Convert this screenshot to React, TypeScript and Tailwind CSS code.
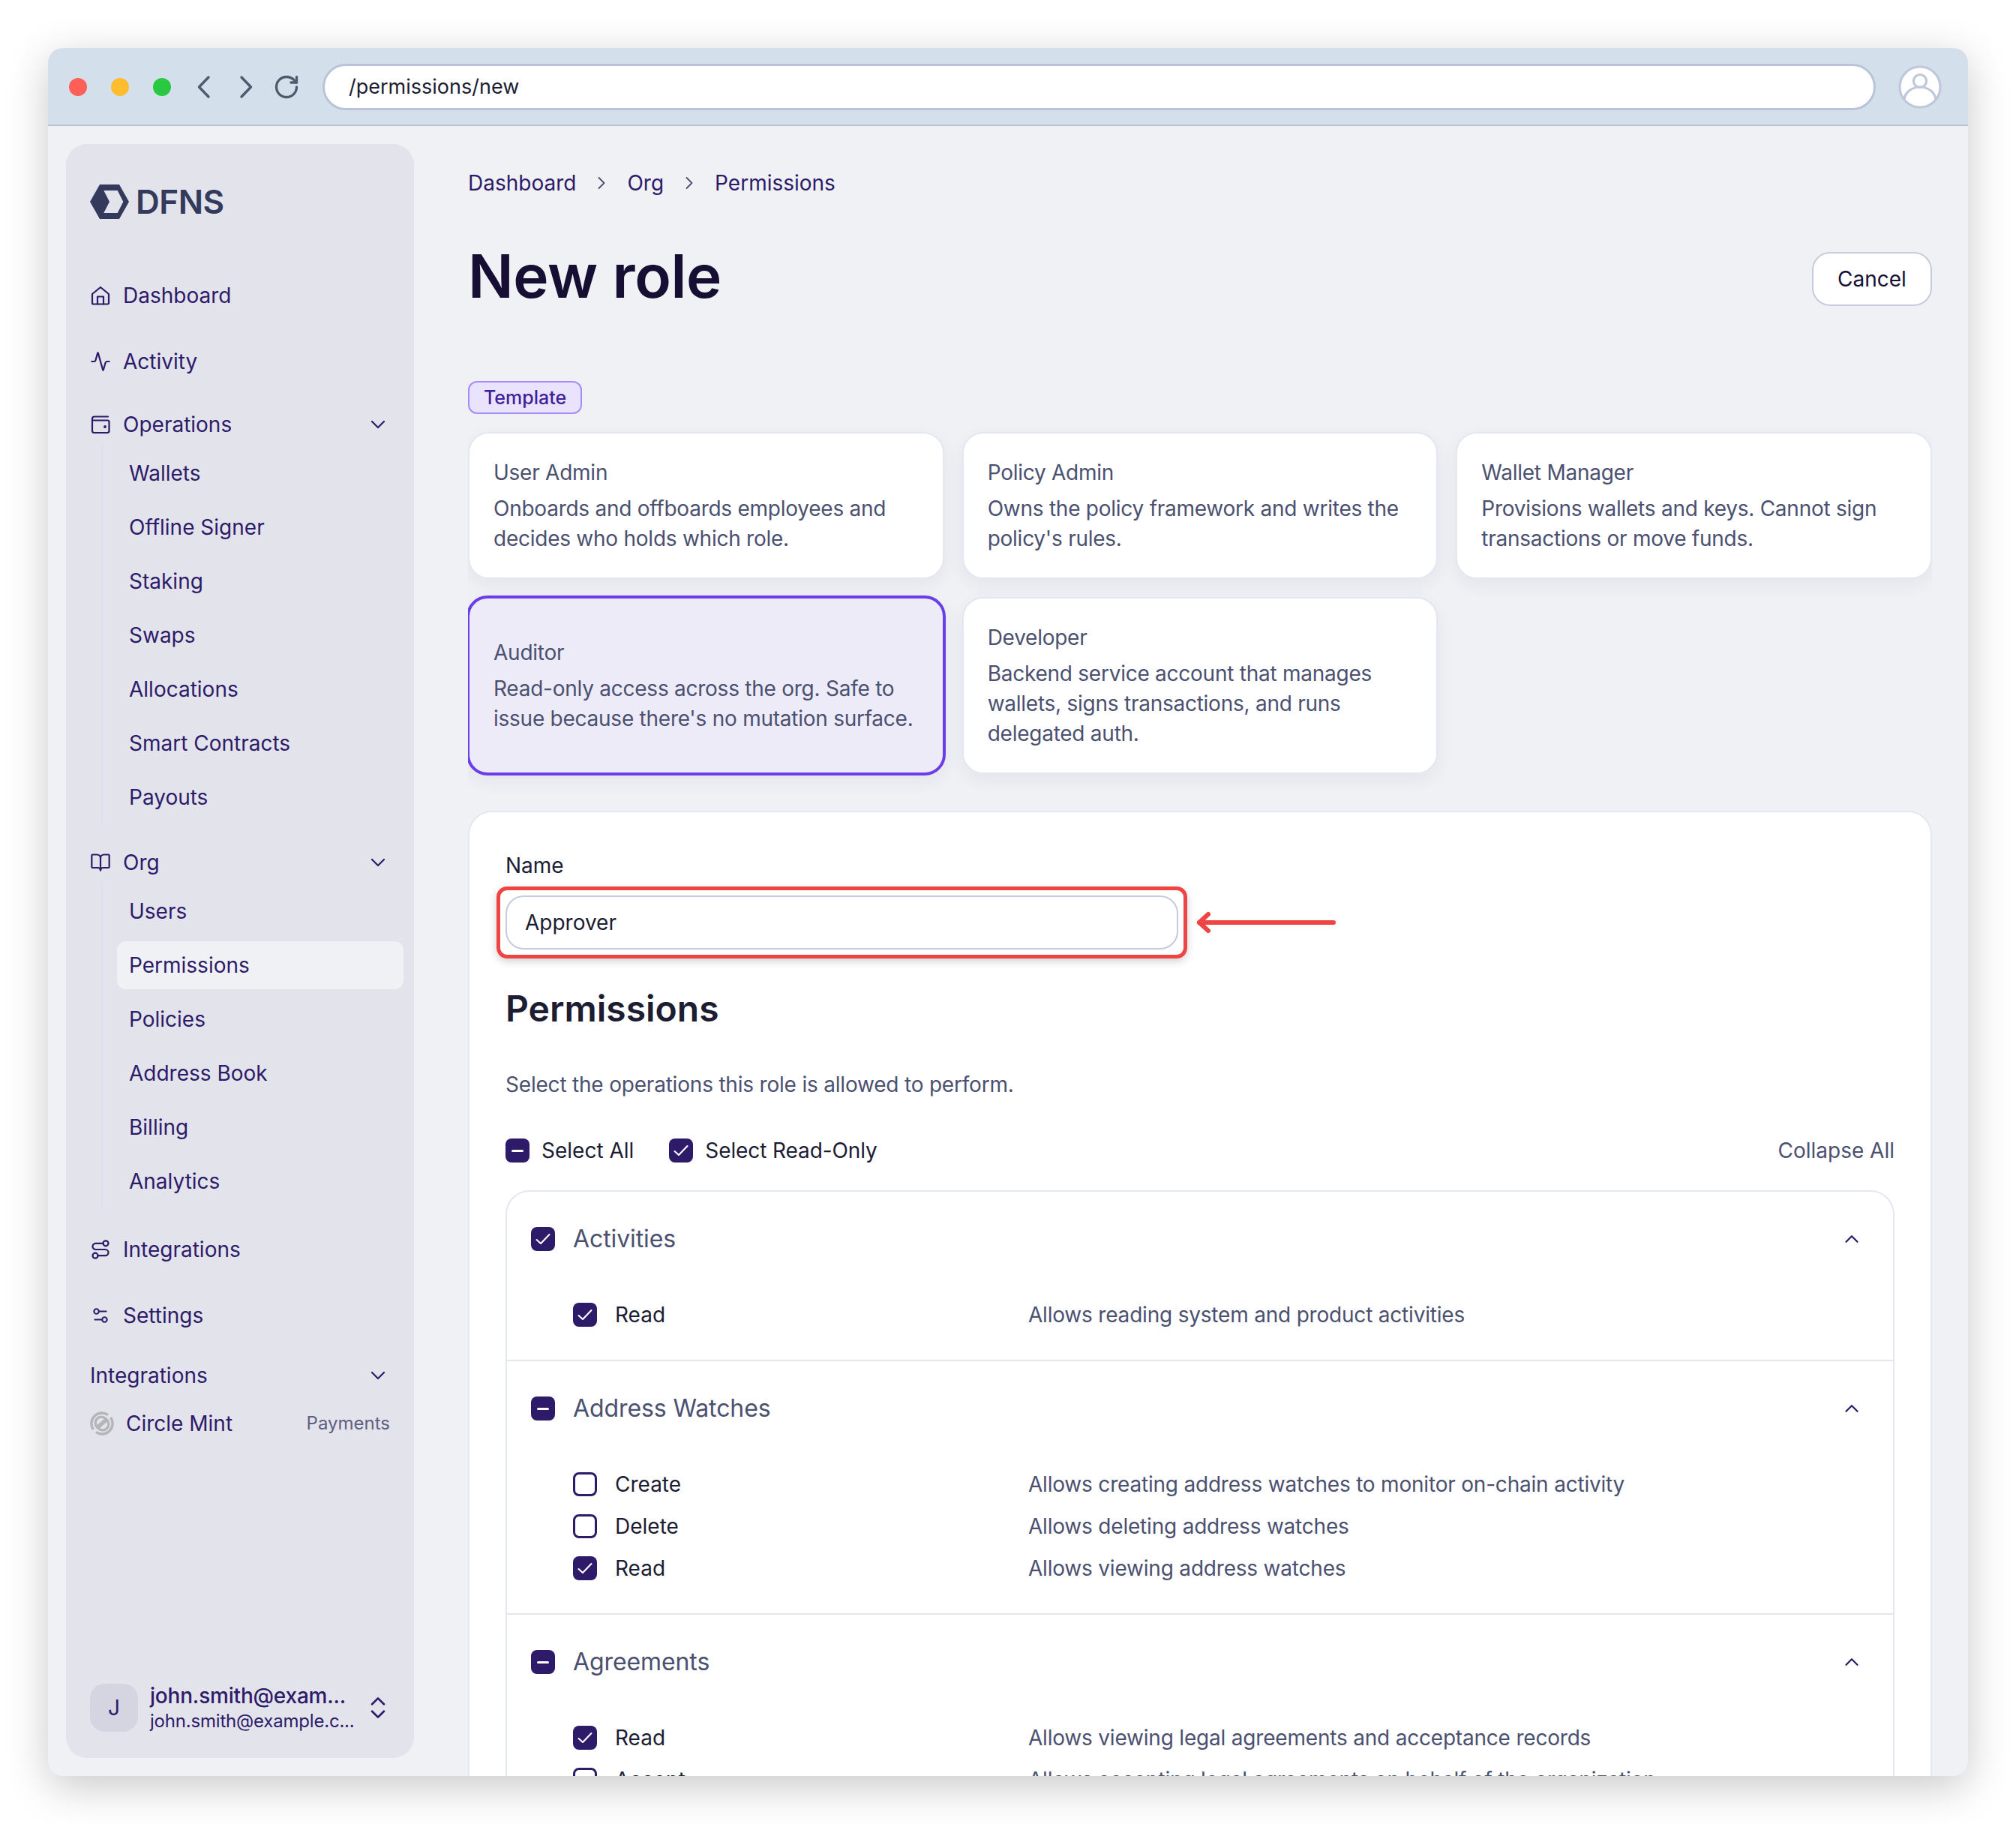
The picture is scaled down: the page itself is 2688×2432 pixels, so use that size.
import React from "react";
import { Activity, BookOpen, ChevronDown, ChevronRight, ChevronUp, ChevronsUpDown, RotateCw, Route, Settings2 } from "lucide-react";

const Home = () => (
  <svg width="28" height="28" viewBox="0 0 28 28" fill="none" stroke="#2d1b69" strokeWidth="2.2" strokeLinejoin="round" strokeLinecap="round">
    <path d="M3 12 L14 3 L25 12 V24 a1.5 1.5 0 0 1 -1.5 1.5 H4.5 A1.5 1.5 0 0 1 3 24 Z" />
    <path d="M10 25.5 V15.5 H18 V25.5" />
  </svg>
);

const WalletIcon = () => (
  <svg width="28" height="28" viewBox="0 0 28 28" fill="none" stroke="#2d1b69" strokeWidth="2.2" strokeLinejoin="round" strokeLinecap="round">
    <path d="M24 3.5 H6 A3 3 0 0 0 3 6.5 V22.5 A2.5 2.5 0 0 0 5.5 25 H23 A2.5 2.5 0 0 0 25.5 22.5 V10.5 A2 2 0 0 0 23.5 8.5 H3.5" />
    <circle cx="20" cy="17" r="0.8" fill="#2d1b69" />
  </svg>
);

const Logo = () => (
  <svg width="52" height="46" viewBox="0 0 52 46">
    <path d="M0 23 L13 0 H39 L52 23 L39 46 H13 Z" fill="#333a5c" />
    <path d="M18.3 8 H36.7 L44.3 23 L36.7 38 H18.3 L26 23 Z" fill="#e3e3ec" />
  </svg>
);

const CircleMint = () => (
  <svg width="32" height="32" viewBox="0 0 32 32" fill="none" stroke="#b5b5b9" strokeWidth="3.4">
    <path d="M24 4.6 A14 14 0 0 0 4.4 24" />
    <path d="M8 27.4 A14 14 0 0 0 27.6 8" />
    <path d="M20.5 9.2 A8 8 0 0 0 9.2 20.5 L22.5 9" />
    <path d="M11.5 22.8 A8 8 0 0 0 22.8 11.5 L9.5 23" />
  </svg>
);

type CheckState = "on" | "off" | "mixed";

const Box = ({ state }: { state: CheckState }) => {
  if (state === "off") {
    return <span className="block w-[32px] h-[32px] shrink-0 rounded-[8px] border-[3px] border-[#2d1b69] bg-white" />;
  }
  return (
    <span className="flex items-center justify-center w-[32px] h-[32px] shrink-0 rounded-[8px] bg-[#2d1b69]">
      {state === "on" ? (
        <svg width="24" height="24" viewBox="0 0 24 24" fill="none" stroke="#fff" strokeWidth="2.1" strokeLinecap="round" strokeLinejoin="round">
          <path d="M3.5 13 L9 18 L20.5 6" />
        </svg>
      ) : (
        <span className="block w-[16px] h-[3px] rounded-full bg-white" />
      )}
    </span>
  );
};

const Top = ({ icon, label, className = "" }: { icon: React.ReactNode; label: string; className?: string }) => (
  <div className={`flex items-center h-[64px] gap-[16px] text-[28px] text-[#2d1b69] ${className}`}>
    <span className="flex items-center justify-center w-[28px] h-[28px]">{icon}</span>
    <span>{label}</span>
  </div>
);

const Group = ({ icon, label, className = "" }: { icon?: React.ReactNode; label: string; className?: string }) => (
  <div className={`flex items-center justify-between h-[56px] text-[28px] text-[#2d1b69] ${className}`}>
    <div className="flex items-center gap-[16px]">
      {icon && <span className="flex items-center justify-center w-[28px] h-[28px]">{icon}</span>}
      <span>{label}</span>
    </div>
    <ChevronDown size={32} strokeWidth={1.7} color="#2d1b69" />
  </div>
);

const Sub = ({ items, active }: { items: string[]; active?: string }) => (
  <div className="ml-[15px] mt-[1px] border-l-2 border-[#dde0ee]">
    {items.map((t) => (
      <div key={t} className="flex items-center h-[72px] pl-[19px] text-[28px] text-[#2d1b69]">
        <span className={`flex items-center w-[382px] shrink-0 h-[64px] pl-[16px] rounded-[12px] ${t === active ? "bg-[#f0f1f5]" : ""}`}>{t}</span>
      </div>
    ))}
  </div>
);

const Sidebar = () => (
  <aside className="flex flex-col w-[464px] m-[24px] mr-0 px-[32px] pt-[54px] pb-[35px] rounded-[28px] bg-[#e3e3ec]">
    <div className="flex items-center gap-[9px] h-[46px]">
      <Logo />
      <span className="text-[44px] leading-[46px] font-semibold text-[#333a5c] tracking-[-0.5px]">DFNS</span>
    </div>
    <Top className="mt-[70px]" icon={<Home />} label="Dashboard" />
    <Top className="mt-[24px]" icon={<Activity size={28} strokeWidth={1.9} color="#2d1b69" />} label="Activity" />
    <Group className="mt-[24px]" icon={<WalletIcon />} label="Operations" />
    <Sub items={["Wallets", "Offline Signer", "Staking", "Swaps", "Allocations", "Smart Contracts", "Payouts"]} />
    <Group className="mt-[23px]" icon={<BookOpen size={28} strokeWidth={1.9} color="#2d1b69" />} label="Org" />
    <Sub active="Permissions" items={["Users", "Permissions", "Policies", "Address Book", "Billing", "Analytics"]} />
    <Top className="mt-[23px]" icon={<Route size={28} strokeWidth={1.9} color="#2d1b69" />} label="Integrations" />
    <Top className="mt-[24px]" icon={<Settings2 size={26} strokeWidth={1.9} color="#2d1b69" />} label="Settings" />
    <Group className="mt-[20px]" label="Integrations" />
    <div className="flex items-center h-[56px] mt-[8px] text-[28px] text-[#2d1b69]">
      <CircleMint />
      <span className="ml-[16px]">Circle Mint</span>
      <span className="ml-auto text-[24px] text-[#5d6080]">Payments</span>
    </div>
    <div className="flex items-center mt-auto h-[64px]">
      <span className="flex items-center justify-center shrink-0 w-[64px] h-[64px] rounded-[20px] bg-[#d5d5e1] text-[28px] text-[#2d1b69]">J</span>
      <div className="flex flex-col shrink-0 ml-[16px] w-[274px]">
        <span className="text-[28px] leading-[36px] font-medium text-[#2d1b69] tracking-[-0.2px]">john.smith@exam...</span>
        <span className="text-[24px] leading-[32px] text-[#2d1b69] tracking-[-0.2px]">john.smith@example.c...</span>
      </div>
      <ChevronsUpDown size={38} strokeWidth={1.7} color="#2d1b69" className="shrink-0 ml-[11px] -mr-[4px]" />
    </div>
  </aside>
);

const Card = ({ title, lines, selected }: { title: string; lines: string[]; selected?: boolean }) => (
  <div
    className={
      selected
        ? "flex flex-col justify-center rounded-[28px] border-[4px] border-[#6a3de8] bg-[#ecebf7] -m-[2px] px-[32px] py-[32px] shadow-[0_8px_24px_rgba(30,30,80,0.06)]"
        : "flex flex-col rounded-[28px] border-2 border-[#e4e6f1] bg-white px-[32px] py-[32px] shadow-[0_8px_24px_rgba(30,30,80,0.06)]"
    }
  >
    <div className="text-[28px] leading-[40px] mb-[8px] text-[#4b5070] tracking-[-0.25px]">{title}</div>
    {lines.map((l) => (
      <div key={l} className="text-[28px] leading-[40px] text-[#4b5070] whitespace-nowrap tracking-[-0.25px]">{l}</div>
    ))}
  </div>
);

const Row = ({ state, label, desc }: { state: CheckState; label: string; desc: string }) => (
  <div className="flex items-center h-[56px] pl-[88px] text-[28px]">
    <Box state={state} />
    <span className="ml-[24px] w-[551px] text-[#1c1c33]">{label}</span>
    <span className="text-[#4b5070] tracking-[-0.2px]">{desc}</span>
  </div>
);

const Section = ({ state, title, rows, last }: { state: CheckState; title: string; rows: { state: CheckState; label: string; desc: string }[]; last?: boolean }) => (
  <div className={`pb-[32px] ${last ? "" : "border-b-2 border-[#e4e6f1]"}`}>
    <div className="flex items-center h-[126px] mb-[10px] pl-[32px] pr-[40px]">
      <Box state={state} />
      <span className="ml-[24px] text-[32px] text-[#4b5070] tracking-[-0.1px]">{title}</span>
      <ChevronUp size={30} strokeWidth={1.8} color="#2d1b69" className="ml-auto" />
    </div>
    {rows.map((r) => (
      <Row key={r.label} {...r} />
    ))}
  </div>
);

const Form = () => (
  <div className="mt-[49px] rounded-t-[32px] border-2 border-b-0 border-[#e4e6f1] bg-white px-[48px] pt-[51px] h-[1400px]">
    <div className="text-[28px] leading-[40px] text-[#1c1c33]">Name</div>
    <div className="relative mt-[20px] w-[897px]">
      <div className="flex items-center h-[72px] px-[24px] rounded-[24px] border-2 border-[#c5cade] text-[28px] text-[#1c1c33]">Approver</div>
      <div className="absolute -left-[12px] -right-[12px] -top-[12px] -bottom-[12px] rounded-[14px] border-[5px] border-[#ef4444] shadow-[0_4px_12px_rgba(0,0,0,0.18)]" />
      <svg className="absolute left-[920px] top-[16px]" width="190" height="40" viewBox="0 0 190 40" fill="none" stroke="#ef4444" strokeWidth="6" strokeLinecap="round" strokeLinejoin="round">
        <path d="M184 20 H5" />
        <path d="M17 9 L5 20 L17 31" />
      </svg>
    </div>
    <h2 className="mt-[47px] text-[48px] leading-[64px] font-semibold text-[#1c1c33]">Permissions</h2>
    <p className="mt-[49px] text-[28px] leading-[40px] text-[#4b5070] tracking-[-0.2px]">Select the operations this role is allowed to perform.</p>
    <div className="flex items-center mt-[48px] h-[40px] text-[28px] text-[#1c1c33]">
      <Box state="mixed" />
      <span className="ml-[16px]">Select All</span>
      <span className="ml-[47px]"><Box state="on" /></span>
      <span className="ml-[16px] tracking-[-0.1px]">Select Read-Only</span>
      <span className="ml-auto text-[#4b5070]">Collapse All</span>
    </div>
    <div className="mt-[33px] rounded-t-[32px] border-2 border-b-0 border-[#e4e6f1]">
      <Section state="on" title="Activities" rows={[{ state: "on", label: "Read", desc: "Allows reading system and product activities" }]} />
      <Section
        state="mixed"
        title="Address Watches"
        rows={[
          { state: "off", label: "Create", desc: "Allows creating address watches to monitor on-chain activity" },
          { state: "off", label: "Delete", desc: "Allows deleting address watches" },
          { state: "on", label: "Read", desc: "Allows viewing address watches" },
        ]}
      />
      <Section
        last
        state="mixed"
        title="Agreements"
        rows={[
          { state: "on", label: "Read", desc: "Allows viewing legal agreements and acceptance records" },
          { state: "off", label: "Accept", desc: "Allows accepting legal agreements on behalf of the organization" },
        ]}
      />
    </div>
  </div>
);

export default function App() {
  return (
    <div className="w-[2688px] h-[2432px] bg-white p-[64px] overflow-hidden" style={{ fontFamily: "Inter, sans-serif" }}>
      <div className="flex flex-col w-[2560px] h-[2304px] rounded-[20px] overflow-hidden bg-[#f0f1f5] shadow-[0_14px_56px_rgba(0,0,0,0.22)]">
        <header className="flex items-center shrink-0 h-[104px] pt-[2px] bg-[#d4dfec] border-b-2 border-[#b8c4d8]">
          <span className="ml-[28px] w-[24px] h-[24px] rounded-full bg-[#ff5f57]" />
          <span className="ml-[32px] w-[24px] h-[24px] rounded-full bg-[#febc2e]" />
          <span className="ml-[32px] w-[24px] h-[24px] rounded-full bg-[#28c840]" />
          <svg className="ml-[34px]" width="20" height="32" viewBox="0 0 20 32" fill="none" stroke="#4f5a6e" strokeWidth="3.4" strokeLinecap="round" strokeLinejoin="round">
            <path d="M16 3 L3.5 16 L16 29" />
          </svg>
          <svg className="ml-[36px]" width="20" height="32" viewBox="0 0 20 32" fill="none" stroke="#4f5a6e" strokeWidth="3.4" strokeLinecap="round" strokeLinejoin="round">
            <path d="M4 3 L16.5 16 L4 29" />
          </svg>
          <RotateCw className="ml-[26px]" size={36} strokeWidth={2.2} color="#4f5a6e" />
          <div className="flex items-center ml-[30px] w-[2071px] h-[62px] pl-[32px] rounded-full border-[3px] border-[#b8c4d8] bg-white text-[27px] text-[#1c1c33]">/permissions/new</div>
          <svg className="ml-[30px]" width="58" height="58" viewBox="0 0 58 58" fill="#fff" stroke="#bfc8da" strokeWidth="3.2">
            <circle cx="29" cy="29" r="27" />
            <circle cx="29" cy="21" r="8.5" fill="none" />
            <path d="M8 47 A21 18 0 0 1 50 47" fill="none" />
          </svg>
        </header>
        <div className="flex flex-1 min-h-0">
          <Sidebar />
          <main className="w-[1952px] ml-[72px] pt-[56px] min-h-0 overflow-hidden">
            <nav className="flex items-center h-[40px] text-[28px] text-[#2d1b69]">
              <span>Dashboard</span>
              <ChevronRight className="ml-[20px]" size={28} strokeWidth={1.6} color="#4b5070" />
              <span className="ml-[20px]">Org</span>
              <ChevronRight className="ml-[20px]" size={28} strokeWidth={1.6} color="#4b5070" />
              <span className="ml-[20px]">Permissions</span>
            </nav>
            <div className="flex items-center justify-between mt-[56px] h-[96px]">
              <h1 className="text-[80px] leading-[96px] font-semibold text-[#160f33] tracking-[-0.4px]">New role</h1>
              <button className="h-[72px] w-[160px] mt-[8px] rounded-[24px] border-2 border-[#c5cade] bg-white text-[28px] text-[#160f33]">Cancel</button>
            </div>
            <span className="block mt-[92px] w-[152px] h-[44px] leading-[40px] text-center rounded-[12px] border-2 border-[#a78bfa] bg-[#e9e3fe] text-[25px] font-medium text-[#41209a]">Template</span>
            <div className="grid grid-cols-3 gap-[24px] mt-[24px]">
              <Card title="User Admin" lines={["Onboards and offboards employees and", "decides who holds which role."]} />
              <Card title="Policy Admin" lines={["Owns the policy framework and writes the", "policy's rules."]} />
              <Card title="Wallet Manager" lines={["Provisions wallets and keys. Cannot sign", "transactions or move funds."]} />
              <Card selected title="Auditor" lines={["Read-only access across the org. Safe to", "issue because there's no mutation surface."]} />
              <Card title="Developer" lines={["Backend service account that manages", "wallets, signs transactions, and runs", "delegated auth."]} />
            </div>
            <Form />
          </main>
        </div>
      </div>
    </div>
  );
}
